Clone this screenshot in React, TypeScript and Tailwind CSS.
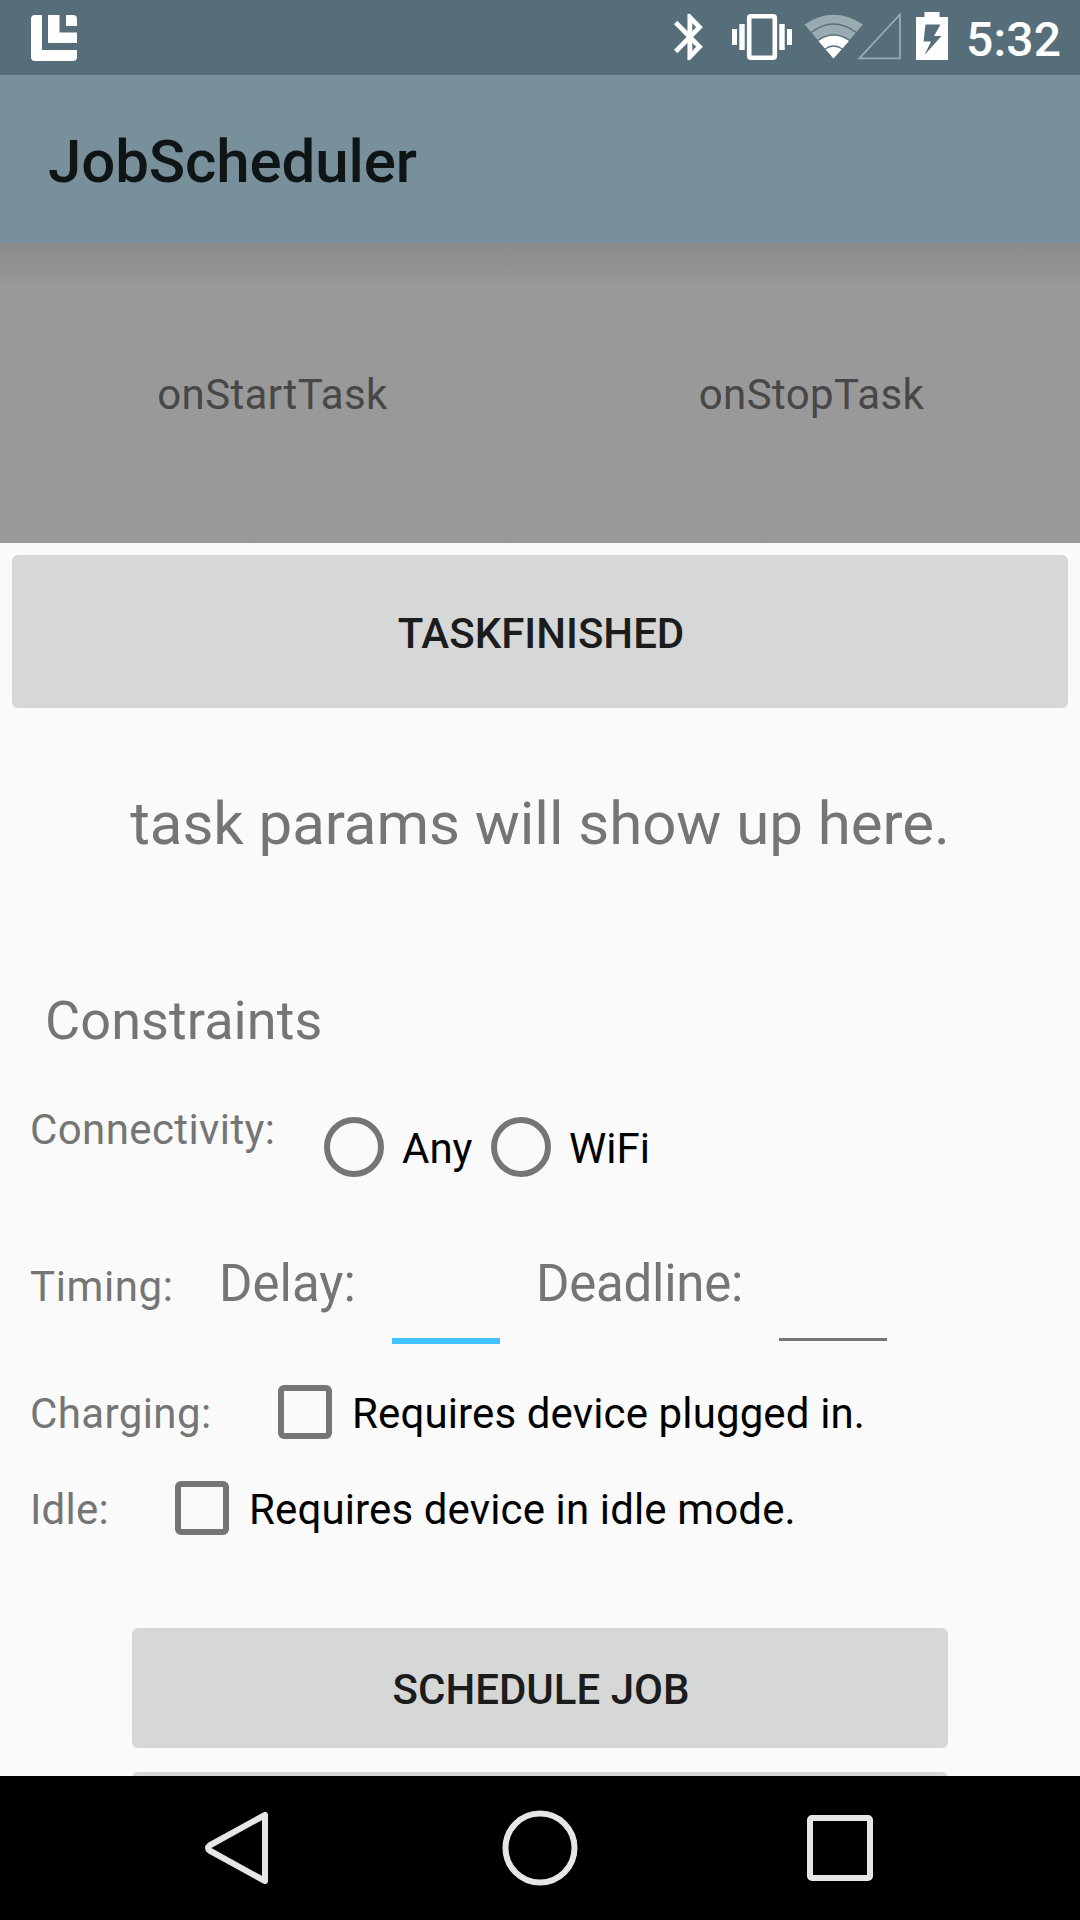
import React from "react";

function StatusIcons() {
  return (
    <svg width="300" height="75" viewBox="660 0 300 75" fill="none">
      {/* bluetooth */}
      <path
        transform="translate(663 9.4) scale(2.24 2.3)"
        fill="#fff"
        stroke="#fff"
        strokeWidth="0.15"
        d="M17.71 7.71L12 2h-1v7.59L6.41 5 5 6.41 10.59 12 5 17.59 6.41 19 11 14.41V22h1l5.710-5.710-4.300-4.290 4.300-4.290zM13 5.830l1.880 1.880L13 9.590V5.830zm1.880 10.460L13 18.170v-3.760l1.880 1.880z"
      />
      {/* vibrate */}
      <rect x="749.2" y="16.2" width="25.6" height="41.6" rx="1.8" stroke="#fff" strokeWidth="4.6" />
      <path d="M732 29h5v16h-5zM739.3 24h5.4v26h-5.4zM779.3 24h5.4v26h-5.4zM787 29h5v16h-5z" fill="#fff" />
      {/* wifi */}
      <path d="M833.5 58.500 L804.500 24.500 Q833.500 5 863 24.500 Z" fill="#9aaab1" />
      <path d="M833.500 58.500 L818.500 41 Q833.500 30.500 849 41 Z" fill="#fff" />
      <path
        d="M811 32.500 Q833.500 15.500 856.500 32.500 M818 40.300 Q833.500 29.500 849.500 40.300 M825 49 Q833.500 43 842.500 49"
        stroke="#566e7a"
        strokeWidth="1.300"
      />
      {/* cell signal */}
      <path d="M859.300 58.300 L900 14.500 V58.300 Z" stroke="#9aaab1" strokeWidth="1.800" />
      {/* battery */}
      <path fillRule="evenodd" fill="#fff" d="M924.500 12h15v5h8.500v43h-32v-43h8.500zM925.500 24.500l-2 17h7.500l-6.500 13.500 17-19h-7.500l6.500-11.500z" />
    </svg>
  );
}

function StatusBar() {
  return (
    <div className="flex h-[75px] items-center bg-[#566e7a]">
      <svg className="ml-[31px]" width="46" height="46" viewBox="0 0 46 46" fill="#fff">
        <path d="M4 0H11V35H46V42Q46 46 42 46H4Q0 46 0 42V4Q0 0 4 0Z" />
        <path d="M17 0H28.500V17.500H46V28H17Z" />
        <path d="M35 0H42Q46 0 46 4V11H35Z" />
      </svg>
      <div className="ml-[583px] h-[75px] w-[300px]">
        <StatusIcons />
      </div>
      <span className="ml-[6px] mt-[5px] text-[48px] leading-[56px] font-medium tracking-[0.2px] text-white">5:32</span>
    </div>
  );
}

function Checkbox({ label }: { label: string }) {
  return (
    <div className="flex items-center tracking-[0.13px] text-black">
      <span className="h-[54px] w-[54px] rounded-[6px] border-[6px] border-[#757575]" />
      <span className="ml-[20px] mt-[4px]">{label}</span>
    </div>
  );
}

function Radio({ label }: { label: string }) {
  return (
    <div className="flex items-center text-black">
      <span className="h-[60px] w-[60px] rounded-full border-[6px] border-[#757575]" />
      <span className="ml-[18px] mt-[4px]">{label}</span>
    </div>
  );
}

export default function App() {
  return (
    <div className="flex h-[1920px] w-[1080px] flex-col overflow-hidden bg-[#fafafa] font-['Roboto',sans-serif] text-[42px] leading-[50px] whitespace-nowrap text-[#757575]">
      <StatusBar />
      <header className="flex h-[168px] items-center bg-[#78909c] pl-[48px]">
        <h1 className="mt-[5px] text-[60px] leading-[70px] font-medium tracking-[-0.1px] text-[#0f1415]">JobScheduler</h1>
      </header>

      <main className="flex h-[1533px] flex-col overflow-hidden [&>*]:shrink-0">
        <div className="grid h-[300px] grid-cols-2 bg-[#999999] bg-linear-to-b from-[#8a8a8a] to-[#999999] to-[44px] text-center tracking-[0.4px] text-[#474747]">
          <span className="mt-[127px] pl-[5px]">onStartTask</span>
          <span className="mt-[127px] pl-[3px]">onStopTask</span>
        </div>

        <button className="mx-[12px] mt-[12px] h-[153px] rounded-[6px] bg-[#d6d8d7] pt-[4px] pl-[2px] font-medium text-[#1c1c1c]">
          TASKFINISHED
        </button>

        <p className="mt-[81px] text-center text-[60px] leading-[70px] tracking-[-0.05px]">task params will show up here.</p>

        <h2 className="mt-[130px] ml-[45px] text-[54px] leading-[64px] tracking-[0.1px]">Constraints</h2>

        <div className="mt-[52px] ml-[30px] flex h-[73px] items-start">
          <span className="w-[246px] tracking-[0.4px]">Connectivity:</span>
          <div className="mt-[12px] ml-[48px] flex">
            <div className="w-[167px]">
              <Radio label="Any" />
            </div>
            <Radio label="WiFi" />
          </div>
        </div>

        <div className="mt-[76px] ml-[30px] flex h-[90px] items-start">
          <span className="mt-[8px] w-[144px] tracking-[0.6px]">Timing:</span>
          <span className="ml-[45px] w-[137px] text-[51px] leading-[60px]">Delay:</span>
          <span className="ml-[36px] mt-[84px] h-[6px] w-[108px] bg-[#40c4ff]" />
          <span className="ml-[36px] w-[207px] text-[51px] leading-[60px] tracking-[-0.25px]">Deadline:</span>
          <span className="ml-[36px] mt-[84px] h-[3px] w-[108px] bg-[#757575]" />
        </div>

        <div className="mt-[41px] ml-[30px] flex h-[54px] items-center">
          <span className="mt-[4px] w-[248px] tracking-[0.4px]">Charging:</span>
          <Checkbox label="Requires device plugged in." />
        </div>
        <div className="mt-[42px] ml-[30px] flex h-[54px] items-center">
          <span className="mt-[4px] w-[145px] tracking-[0.2px]">Idle:</span>
          <Checkbox label="Requires device in idle mode." />
        </div>

        <button className="mx-[132px] mt-[93px] h-[120px] rounded-[6px] bg-[#d6d8d7] pt-[4px] pl-[2px] font-medium text-[#1c1c1c]">
          SCHEDULE JOB
        </button>
        <div className="mx-[132px] mt-[24px] h-[120px] rounded-[6px] bg-[#d6d8d7]" />
      </main>

      <nav className="flex h-[144px] shrink-0 items-center bg-black">
        <svg className="ml-[202px]" width="72" height="78" viewBox="202 1809 72 78" fill="none" stroke="#e6e6e6" strokeWidth="6" strokeLinejoin="round">
          <path d="M265 1815 V1881 L209.500 1850.500 Q206.500 1848 209.500 1845.500 Z" />
        </svg>
        <svg className="ml-[227px]" width="78" height="78" viewBox="0 0 78 78" fill="none" stroke="#e6e6e6" strokeWidth="6">
          <circle cx="39" cy="39" r="34.500" />
        </svg>
        <span className="ml-[228px] h-[66px] w-[66px] rounded-[5px] border-[6px] border-[#e6e6e6]" />
      </nav>
    </div>
  );
}
